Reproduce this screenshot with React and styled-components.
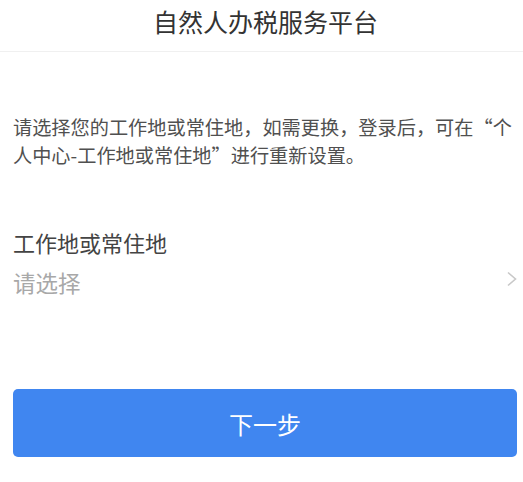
import React from "react";
import styled, { createGlobalStyle } from "styled-components";

const Global = createGlobalStyle`
  html, body { margin: 0; padding: 0; background: #fff; }
  body { font-family: "Noto Sans CJK SC", "Noto Sans", sans-serif; }
`;

const Page = styled.div`
  width: 523px;
  height: 482px;
  background: #fff;
  display: flex;
  flex-direction: column;
`;

const Header = styled.header`
  height: 52px;
  display: flex;
  align-items: center;
  justify-content: center;
  border-bottom: 1px solid #f0f0f0;
  box-sizing: border-box;
  padding-left: 8px;
`;

const Title = styled.h1`
  margin: 0;
  font-size: 25px;
  font-weight: 400;
  color: #333;
  line-height: 1;
  padding-bottom: 8px;
`;

const Body = styled.main`
  padding: 0 6px 0 13px;
  display: flex;
  flex-direction: column;
`;

const Notice = styled.p`
  margin: 61px 0 0;
  font-size: 19.2px;
  line-height: 28px;
  color: #505050;
  line-break: anywhere;
`;

const Label = styled.div`
  margin-top: 58px;
  font-size: 22px;
  line-height: 30px;
  color: #444;
`;

const SelectRow = styled.div`
  margin-top: 5px;
  height: 40px;
  display: flex;
  align-items: center;
  justify-content: space-between;
`;

const Placeholder = styled.span`
  font-size: 22.5px;
  color: #a8a8a8;
`;

const Chevron = styled.svg`
  width: 12px;
  height: 16px;
  margin-top: -6px;
`;

const Button = styled.button`
  margin-top: 87px;
  height: 68px;
  width: 100%;
  border: none;
  border-radius: 5px;
  background: #4086f0;
  color: #fff;
  font-family: inherit;
  font-size: 24px;
  cursor: pointer;
`;

export default function App() {
  return (
    <Page lang="zh-CN">
      <Global />
      <Header>
        <Title>自然人办税服务平台</Title>
      </Header>
      <Body>
        <Notice>
          请选择您的工作地或常住地，如需更换，登录后，可在“个人中心-工作地或常住地”进行重新设置。
        </Notice>
        <Label>工作地或常住地</Label>
        <SelectRow>
          <Placeholder>请选择</Placeholder>
          <Chevron viewBox="0 0 12 16">
            <path d="M3 1.5 L10.5 8 L3 14.5" fill="none" stroke="#c8c8c8" strokeWidth="1.6" />
          </Chevron>
        </SelectRow>
        <Button>下一步</Button>
      </Body>
    </Page>
  );
}
